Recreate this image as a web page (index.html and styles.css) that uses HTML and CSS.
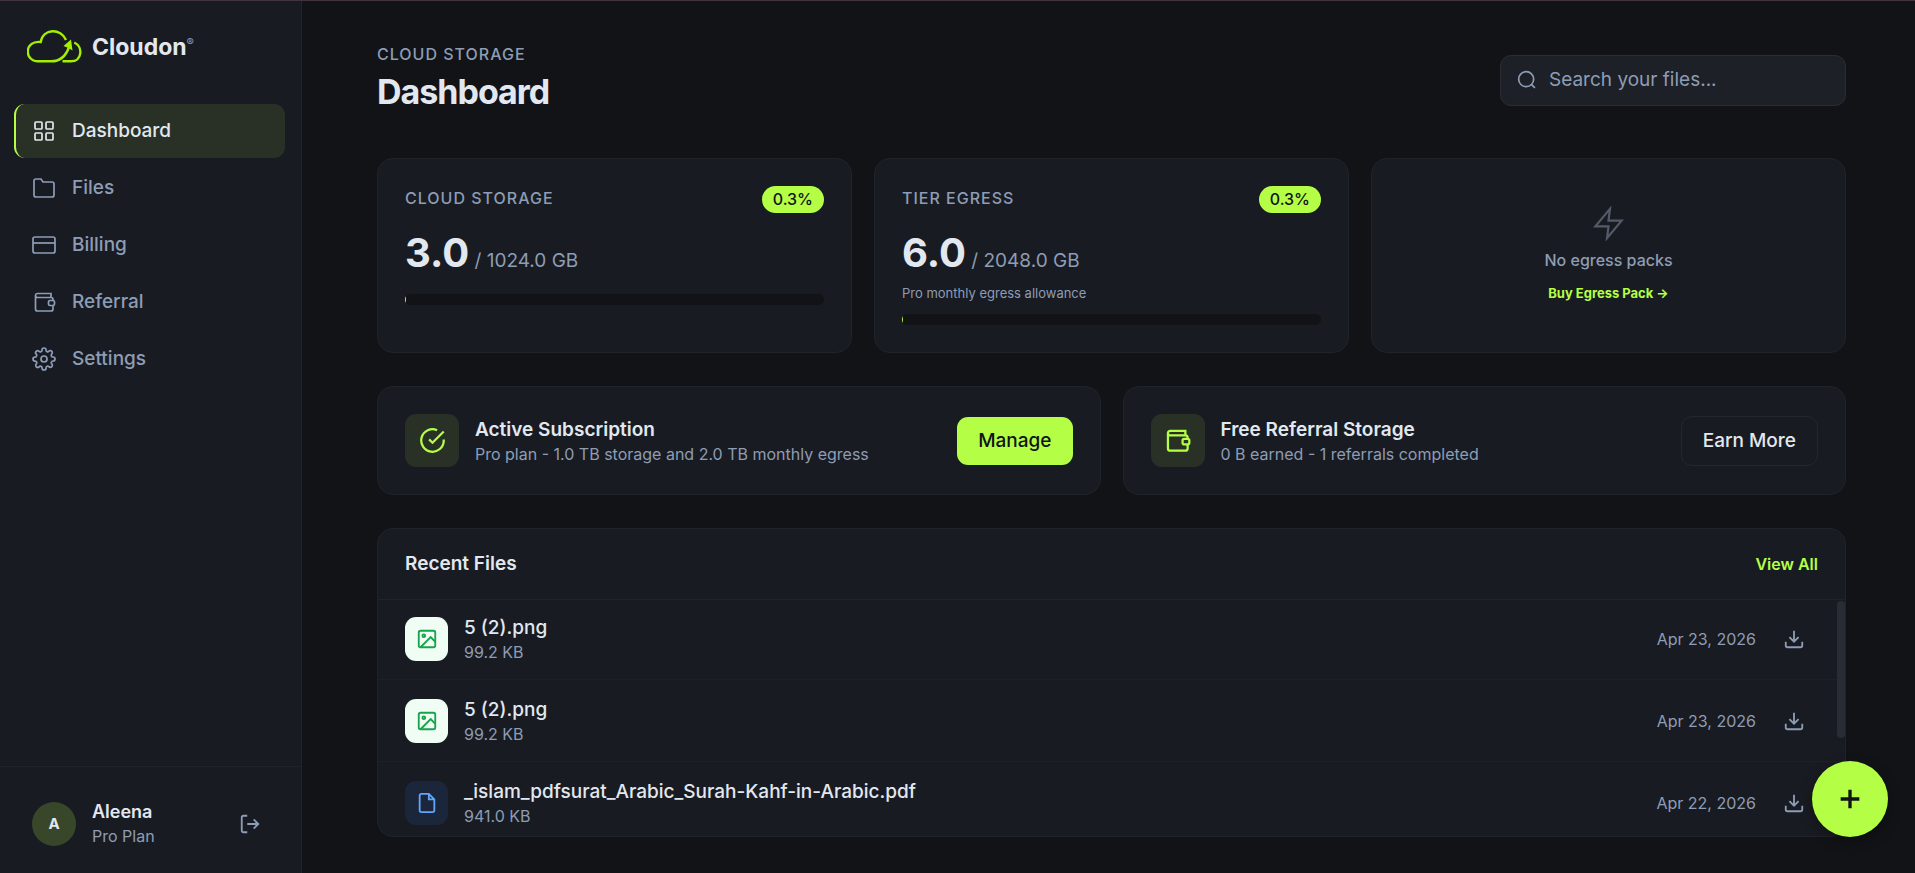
FILE: index.html
```html
<!DOCTYPE html>
<html lang="en">
<head>
<meta charset="utf-8">
<title>Cloudon – Dashboard</title>
<link rel="stylesheet" href="styles.css">
</head>
<body>
<svg class="sprite" aria-hidden="true">
  <symbol id="i-grid" viewBox="0 0 24 24"><rect x="3" y="3" width="7" height="7" rx="1"/><rect x="14" y="3" width="7" height="7" rx="1"/><rect x="14" y="14" width="7" height="7" rx="1"/><rect x="3" y="14" width="7" height="7" rx="1"/></symbol>
  <symbol id="i-folder" viewBox="0 0 24 24"><path d="M22 19a2 2 0 0 1-2 2H4a2 2 0 0 1-2-2V5a2 2 0 0 1 2-2h5l2 3h9a2 2 0 0 1 2 2z"/></symbol>
  <symbol id="i-card" viewBox="0 0 24 24"><rect x="1" y="4" width="22" height="16" rx="2"/><path d="M1 10h22"/></symbol>
  <symbol id="i-wallet" viewBox="0 0 24 24"><path d="M19 7.500V3.500H5.500a2 2 0 0 0-2 2V19a2 2 0 0 0 2 2H19a2 2 0 0 0 2-2v-3.500M3.500 5.500a2 2 0 0 0 2 2H19a2 2 0 0 1 2 2v1"/><rect x="16.500" y="10.500" width="6" height="5" rx="1.500"/></symbol>
  <symbol id="i-gear" viewBox="0 0 24 24"><circle cx="12" cy="12" r="3"/><path d="M19.400 15a1.650 1.650 0 0 0 .33 1.820l.06.06a2 2 0 1 1-2.830 2.830l-.06-.06a1.650 1.650 0 0 0-1.820-.33 1.650 1.650 0 0 0-1 1.510V21a2 2 0 0 1-4 0v-.09A1.650 1.650 0 0 0 9 19.400a1.650 1.650 0 0 0-1.820.33l-.06.06a2 2 0 1 1-2.830-2.830l.06-.06a1.650 1.650 0 0 0 .33-1.820 1.650 1.650 0 0 0-1.510-1H3a2 2 0 0 1 0-4h.09A1.650 1.650 0 0 0 4.600 9a1.650 1.650 0 0 0-.33-1.820l-.06-.06a2 2 0 1 1 2.830-2.830l.06.06a1.650 1.650 0 0 0 1.820.33H9a1.650 1.650 0 0 0 1-1.510V3a2 2 0 0 1 4 0v.09a1.650 1.650 0 0 0 1 1.510 1.650 1.650 0 0 0 1.820-.33l.06-.06a2 2 0 1 1 2.830 2.830l-.06.06a1.650 1.650 0 0 0-.33 1.820V9a1.650 1.650 0 0 0 1.510 1H21a2 2 0 0 1 0 4h-.09a1.650 1.650 0 0 0-1.510 1z"/></symbol>
  <symbol id="i-logout" viewBox="0 0 24 24"><path d="M9 21H5a2 2 0 0 1-2-2V5a2 2 0 0 1 2-2h4M16 17l5-5-5-5M21 12H9"/></symbol>
  <symbol id="i-search" viewBox="0 0 24 24"><circle cx="11" cy="11" r="9"/><path d="M21.500 21.500l-4-4"/></symbol>
  <symbol id="i-bolt" viewBox="0 0 24 24"><path d="M13 2L3 14h9l-1 8 10-12h-9l1-8z"/></symbol>
  <symbol id="i-check" viewBox="0 0 24 24"><path d="M22 11.080V12a10 10 0 1 1-5.930-9.140M22 4L12 14.010l-3-3"/></symbol>
  <symbol id="i-image" viewBox="0 0 24 24"><rect x="3" y="3" width="18" height="18" rx="2"/><circle cx="8.500" cy="8.500" r="1.500"/><path d="M21 15l-5-5L5 21"/></symbol>
  <symbol id="i-file" viewBox="0 0 24 24"><path d="M14 2H6a2 2 0 0 0-2 2v16a2 2 0 0 0 2 2h12a2 2 0 0 0 2-2V8zM14 2v6h6"/></symbol>
  <symbol id="i-download" viewBox="0 0 24 24"><path d="M21 15v4a2 2 0 0 1-2 2H5a2 2 0 0 1-2-2v-4M7 10l5 5 5-5M12 15V3"/></symbol>
  <symbol id="i-plus" viewBox="0 0 24 24"><path d="M12 5v14M5 12h14"/></symbol>
</svg>

<div class="app">
  <aside class="sidebar">
    <a class="brand" href="#">
      <svg class="brand-mark" viewBox="0 0 55 33" aria-hidden="true">
        <path d="M39 10C34 -2 16 -2 13.700 12C-3 10 -3 31.300 11 31.300H24C33 31.300 39 26 42 17M47.300 12.500C56.500 17 55 31.300 44 31.300H35.500"/>
        <path class="brand-tip" d="M44 9.500L45.500 20.500 41.500 18 36.500 16z"/>
      </svg>
      <span class="brand-name">Cloudon<sup>®</sup></span>
    </a>
    <nav class="nav">
      <a class="nav-item active" href="#" aria-current="page"><svg class="icon"><use href="#i-grid"/></svg>Dashboard</a>
      <a class="nav-item" href="#"><svg class="icon"><use href="#i-folder"/></svg>Files</a>
      <a class="nav-item" href="#"><svg class="icon"><use href="#i-card"/></svg>Billing</a>
      <a class="nav-item" href="#"><svg class="icon"><use href="#i-wallet"/></svg>Referral</a>
      <a class="nav-item" href="#"><svg class="icon"><use href="#i-gear"/></svg>Settings</a>
    </nav>
    <div class="user">
      <span class="avatar">A</span>
      <div class="user-text">
        <div class="user-name">Aleena</div>
        <div class="sub">Pro Plan</div>
      </div>
      <button class="icon-btn" type="button" aria-label="Log out"><svg class="icon"><use href="#i-logout"/></svg></button>
    </div>
  </aside>

  <main class="main">
    <header class="header">
      <div>
        <div class="label">CLOUD STORAGE</div>
        <h1>Dashboard</h1>
      </div>
      <label class="search">
        <svg class="icon"><use href="#i-search"/></svg>
        <input type="search" placeholder="Search your files..." aria-label="Search your files">
      </label>
    </header>

    <section class="stats">
      <article class="card stat">
        <div class="stat-head"><h2 class="label">CLOUD STORAGE</h2><span class="badge">0.3%</span></div>
        <div class="amount"><strong>3.0</strong> / 1024.0 GB</div>
        <div class="bar"><div class="bar-fill" style="width:0.3%"></div></div>
      </article>
      <article class="card stat">
        <div class="stat-head"><h2 class="label">TIER EGRESS</h2><span class="badge">0.3%</span></div>
        <div class="amount"><strong>6.0</strong> / 2048.0 GB</div>
        <div class="note">Pro monthly egress allowance</div>
        <div class="bar"><div class="bar-fill" style="width:0.3%"></div></div>
      </article>
      <article class="card empty">
        <svg class="icon bolt"><use href="#i-bolt"/></svg>
        <p class="empty-text">No egress packs</p>
        <a class="buy" href="#">Buy Egress Pack →</a>
      </article>
    </section>

    <section class="promos">
      <article class="card promo">
        <span class="tile"><svg class="icon"><use href="#i-check"/></svg></span>
        <div class="grow"><h3>Active Subscription</h3><p class="sub">Pro plan - 1.0 TB storage and 2.0 TB monthly egress</p></div>
        <button class="btn primary" type="button">Manage</button>
      </article>
      <article class="card promo">
        <span class="tile"><svg class="icon"><use href="#i-wallet"/></svg></span>
        <div class="grow"><h3>Free Referral Storage</h3><p class="sub">0 B earned - 1 referrals completed</p></div>
        <button class="btn outline" type="button">Earn More</button>
      </article>
    </section>

    <section class="card recent">
      <div class="recent-head"><h3>Recent Files</h3><a class="view-all" href="#">View All</a></div>
      <div class="files-wrap">
        <ul class="files">
          <li class="file">
            <span class="file-tile image"><svg class="icon"><use href="#i-image"/></svg></span>
            <div class="grow"><div class="file-name">5 (2).png</div><div class="sub">99.2 KB</div></div>
            <time class="sub" datetime="2026-04-23">Apr 23, 2026</time>
            <button class="icon-btn" type="button" aria-label="Download"><svg class="icon"><use href="#i-download"/></svg></button>
          </li>
          <li class="file">
            <span class="file-tile image"><svg class="icon"><use href="#i-image"/></svg></span>
            <div class="grow"><div class="file-name">5 (2).png</div><div class="sub">99.2 KB</div></div>
            <time class="sub" datetime="2026-04-23">Apr 23, 2026</time>
            <button class="icon-btn" type="button" aria-label="Download"><svg class="icon"><use href="#i-download"/></svg></button>
          </li>
          <li class="file">
            <span class="file-tile doc"><svg class="icon"><use href="#i-file"/></svg></span>
            <div class="grow"><div class="file-name">_islam_pdfsurat_Arabic_Surah-Kahf-in-Arabic.pdf</div><div class="sub">941.0 KB</div></div>
            <time class="sub" datetime="2026-04-22">Apr 22, 2026</time>
            <button class="icon-btn" type="button" aria-label="Download"><svg class="icon"><use href="#i-download"/></svg></button>
          </li>
        </ul>
        <div class="scroll-thumb" aria-hidden="true"></div>
      </div>
    </section>
  </main>
</div>
<button class="fab" type="button" aria-label="Upload a file"><svg class="icon"><use href="#i-plus"/></svg></button>
</body>
</html>
```
FILE: styles.css
```css
:root {
  --bg: #111317;
  --panel: #191b22;
  --line: #202329;
  --text: #e2e8f0;
  --muted: #8d9db5;
  --lime: #b4ff45;
  --tint: #293127;
}

* { box-sizing: border-box; }

body {
  margin: 0;
  background: var(--bg);
  color: var(--text);
  font: 400 16px/24px Inter, "Liberation Sans", sans-serif;
}

h1, h2, h3, p, ul { margin: 0; padding: 0; }
a { color: inherit; text-decoration: none; }
button { font: inherit; color: inherit; cursor: pointer; }

.sprite { display: none; }

.icon {
  flex: none;
  width: 24px;
  height: 24px;
  fill: none;
  stroke: currentColor;
  stroke-width: 1.7;
}

.app {
  display: flex;
  height: 100vh;
  border-top: 1px solid #45323f;
}

/* Sidebar */
.sidebar {
  display: flex;
  flex-direction: column;
  flex: none;
  width: 302px;
  background: var(--panel);
  border-right: 1px solid var(--line);
}

.brand {
  display: flex;
  align-items: center;
  gap: 10px;
  padding: 29px 27px 41px;
}
.brand-mark {
  width: 55px;
  height: 33px;
  fill: none;
  stroke: #a3f000;
  stroke-width: 2.4;
}
.brand-mark .brand-tip { fill: #a3f000; stroke: none; }
.brand-name { font-size: 23px; font-weight: 700; line-height: 32px; }
.brand-name sup { font-size: 11px; font-weight: 400; color: var(--muted); line-height: 0; vertical-align: 9px; }

.nav {
  display: flex;
  flex-direction: column;
  gap: 3px;
  flex: 1;
  padding: 0 16px 0 14px;
}
.nav-item {
  display: flex;
  align-items: center;
  gap: 16px;
  height: 54px;
  padding: 0 16px;
  border-left: 2px solid transparent;
  border-radius: 11px;
  color: var(--muted);
  font-size: 19px;
  font-weight: 500;
}
.nav-item.active { background: var(--tint); border-left-color: var(--lime); color: var(--text); }

.user {
  display: flex;
  align-items: center;
  gap: 16px;
  padding: 32px 39px 25px 32px;
  border-top: 1px solid var(--line);
}
.avatar {
  display: grid;
  place-items: center;
  width: 44px;
  height: 44px;
  border-radius: 50%;
  background: #38472a;
  font-size: 15px;
  font-weight: 700;
}
.user-text { flex: 1; }
.user-name { font-size: 18px; font-weight: 600; line-height: 25px; }
.sub { font-size: 16px; line-height: 24px; color: var(--muted); }

.icon-btn {
  display: grid;
  place-items: center;
  padding: 1px;
  border: 0;
  background: none;
  color: var(--muted);
}
.icon-btn .icon { width: 22px; height: 22px; stroke-width: 2; }

/* Main column */
.main {
  display: flex;
  flex-direction: column;
  flex: 1;
  min-width: 0;
  gap: 33px;
  padding: 41px 69px 36px 75px;
}

.header {
  display: flex;
  justify-content: space-between;
  align-items: center;
  padding-bottom: 7px;
}
.label { font-size: 16px; font-weight: 500; line-height: 24px; letter-spacing: 1px; color: var(--muted); }
h1 { font-size: 34px; font-weight: 700; line-height: 52px; letter-spacing: -1px; }

.search {
  display: flex;
  align-items: center;
  gap: 12px;
  width: 346px;
  height: 51px;
  padding: 0 16px;
  border: 1px solid #2a2c35;
  border-radius: 11px;
  background: #1e2028;
  color: var(--muted);
}
.search .icon { width: 20px; height: 20px; stroke-width: 2; }
.search input {
  flex: 1;
  min-width: 0;
  padding: 0;
  border: 0;
  outline: 0;
  background: none;
  color: var(--text);
  font: inherit;
  font-size: 19px;
}
.search input::placeholder { color: var(--muted); opacity: 1; }

.card {
  background: var(--panel);
  border: 1px solid var(--line);
  border-radius: 16px;
}

.stats { display: grid; grid-template-columns: repeat(3, 1fr); gap: 22px; }
.stat { padding: 27px; }
.stat-head { display: flex; justify-content: space-between; align-items: flex-start; }
.badge {
  padding: 0 11px;
  border-radius: 14px;
  background: var(--lime);
  color: #111317;
  font-size: 16px;
  font-weight: 500;
  line-height: 27px;
}
.amount { margin-top: 18px; font-size: 19px; line-height: 44px; color: var(--muted); }
.amount strong { font-size: 40px; font-weight: 700; color: var(--text); }
.note { font-size: 13px; line-height: 20px; color: var(--muted); }
.bar { height: 11px; margin-top: 11px; border-radius: 6px; background: #121317; overflow: hidden; }
.bar-fill { height: 100%; background: var(--lime); }

.empty { display: flex; flex-direction: column; align-items: center; justify-content: center; }
.bolt { width: 35px; height: 35px; color: #535b69; stroke-width: 1.5; }
.empty-text { margin-top: 7px; font-size: 16px; font-weight: 500; color: var(--muted); }
.buy { margin-top: 9px; font-size: 13px; font-weight: 700; color: var(--lime); }

.promos { display: grid; grid-template-columns: repeat(2, 1fr); gap: 22px; }
.promo { display: flex; align-items: center; gap: 16px; padding: 27px; }
.promo .grow { padding-top: 2px; }
.grow { flex: 1; min-width: 0; }
h3 { font-size: 19px; font-weight: 600; line-height: 24px; }
.tile {
  display: grid;
  place-items: center;
  width: 54px;
  height: 53px;
  border-radius: 11px;
  background: var(--tint);
  color: var(--lime);
}
.tile .icon { width: 27px; height: 27px; stroke-width: 2; }
.btn {
  padding: 0 21px;
  border: 1px solid transparent;
  border-radius: 11px;
  font-size: 19px;
  font-weight: 500;
  line-height: 48px;
}
.primary { border: 0; background: var(--lime); color: #111317; }
.outline { background: none; border-color: #24272e; }

.recent { display: flex; flex-direction: column; flex: 1; min-height: 0; overflow: hidden; }
.recent-head {
  display: flex;
  align-items: center;
  justify-content: space-between;
  height: 71px;
  flex: none;
  padding: 0 27px;
  border-bottom: 1px solid var(--line);
}
.view-all { font-size: 16px; font-weight: 600; color: var(--lime); }

.files-wrap { position: relative; flex: 1; min-height: 0; }
.files { height: 100%; overflow: hidden; list-style: none; }
.scroll-thumb {
  position: absolute;
  top: 1px;
  right: 0;
  width: 8px;
  height: 58%;
  border-radius: 4px;
  background: #2a2c35;
}
.file {
  display: flex;
  align-items: center;
  gap: 16px;
  padding: 19px 39px 18px 27px;
  border-bottom: 1px solid #1d2027;
}
.file:first-child { padding-top: 17px; }
.file .grow { margin: -3px 0; padding-top: 2px; }
.file-tile {
  display: grid;
  place-items: center;
  width: 43px;
  height: 44px;
  border-radius: 11px;
}
.file-tile .icon { width: 22px; height: 22px; stroke-width: 2; }
.file-tile.image { background: #f0fdf4; color: #16a34a; }
.file-tile.doc { background: #1c263a; color: #60a5fa; }
.file-name { font-size: 19px; font-weight: 500; line-height: 24px; }
.file time { margin-right: 10px; }

/* Floating upload button */
.fab {
  position: fixed;
  right: 27px;
  bottom: 36px;
  display: grid;
  place-items: center;
  width: 76px;
  height: 76px;
  border: 0;
  border-radius: 50%;
  background: var(--lime);
  color: #111317;
  box-shadow: 0 4px 14px rgba(0, 0, 0, 0.3);
}
.fab .icon { width: 32px; height: 32px; stroke-width: 2.5; }
```
